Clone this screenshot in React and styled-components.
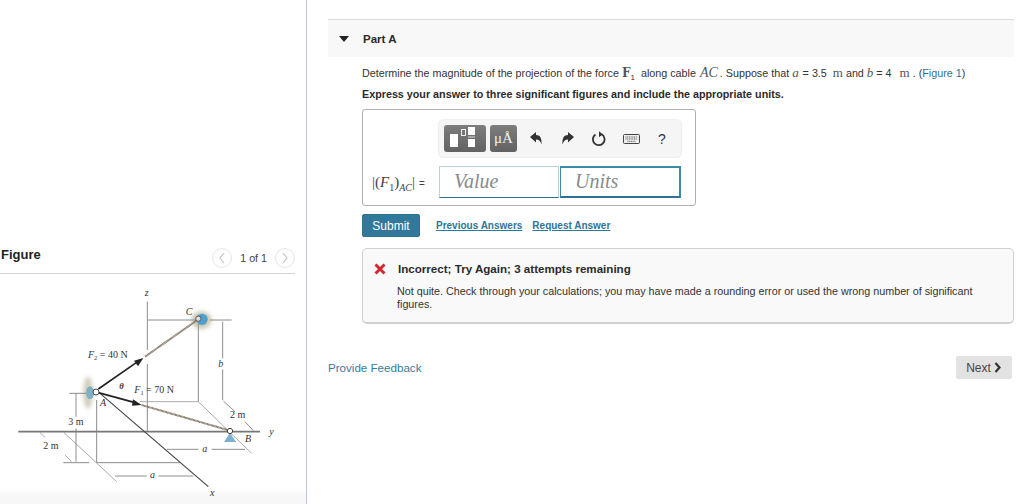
import React from 'react'
import styled, { createGlobalStyle } from 'styled-components'

const GlobalStyle = createGlobalStyle`
  html, body {
    margin: 0;
    padding: 0;
    background: #fff;
  }
  body {
    font-family: "Liberation Sans", Arial, sans-serif;
    color: #222;
  }
`

const Page = styled.div`
  width: 1024px;
  height: 504px;
  display: flex;
  overflow: hidden;
`
const FigurePane = styled.aside`
  width: 306px;
  flex: none;
  box-sizing: content-box;
  border-right: 1px solid #b9c9d9;
  padding-top: 245px;
  display: flex;
  flex-direction: column;
  background: linear-gradient(to bottom, #fff 486px, #f7f7f7 496px);
`
const FigureHeader = styled.div`
  width: 295px;
  height: 29px;
  box-sizing: border-box;
  border-bottom: 1px solid #d4d4d4;
  display: flex;
  align-items: flex-start;
  justify-content: space-between;
  padding: 2px 0 0 1px;
`
const FigureTitle = styled.h2`
  margin: 0;
  font-size: 13px;
  line-height: 15px;
  font-weight: 700;
  color: #222;
`
const Pager = styled.div`
  display: flex;
  align-items: center;
  font-size: 10.7px;
  color: #444;
  gap: 8px;
  margin-top: 1px;
`
const PagerButton = styled.span`
  width: 20px;
  height: 20px;
  box-sizing: border-box;
  border: 1px solid #e6e6e6;
  border-radius: 50%;
  display: flex;
  align-items: center;
  justify-content: center;
`
const Diagram = styled.svg`
  display: block;
  width: 306px;
  height: 229px;
  margin-top: 1px;
  font-family: "Liberation Serif", serif;
`
const Content = styled.main`
  width: 686px;
  margin-left: 21px;
  padding-top: 19px;
`
const PartHeader = styled.div`
  height: 38px;
  box-sizing: border-box;
  background: #f8f8f8;
  border-top: 1px solid #dcdcdc;
  display: flex;
  align-items: center;
  padding-left: 11px;
  gap: 14px;
`
const Caret = styled.span`
  width: 0;
  height: 0;
  border-left: 5px solid transparent;
  border-right: 5px solid transparent;
  border-top: 6px solid #222;
`
const PartTitle = styled.h3`
  margin: 0;
  font-size: 11.5px;
  font-weight: 700;
  color: #2b2b2b;
`
const Body = styled.div`
  padding: 8px 0 0 34px;
`
const Prompt = styled.p`
  margin: 0;
  font-size: 10.75px;
  line-height: 16px;
  color: #333;
  white-space: nowrap;
`
const Instruction = styled.p`
  margin: 6px 0 0;
  font-size: 10.75px;
  line-height: 15px;
  font-weight: 700;
  color: #2b2b2b;
  white-space: nowrap;
`
const MathVar = styled.span`
  font-family: ${props => (props.$bold ? '"DejaVu Serif"' : '"Liberation Serif"')}, serif;
  font-style: ${props => (props.$upright ? 'normal' : 'italic')};
  font-weight: ${props => (props.$bold ? 700 : 400)};
  font-size: ${props => props.$size || 13}px;
  line-height: 0;
  margin: 0 ${props => props.$right || 0}px 0 ${props => props.$left || 0}px;
  color: #555;
`
const Sub = styled.sub`
  font-size: ${props => props.$size || 8}px;
  line-height: 0;
  margin-right: ${props => props.$right || 0}px;
`
const InlineLink = styled.a`
  color: #2f7596;
`
const AnswerBox = styled.div`
  width: 334px;
  height: 97px;
  box-sizing: border-box;
  margin-top: 7px;
  border: 1px solid #b0b0b0;
  border-radius: 3px;
  padding: 9px 13px 0 75px;
`
const Toolbar = styled.div`
  height: 39px;
  box-sizing: border-box;
  background: #f5f5f5;
  border: 1px solid #eee;
  border-radius: 5px;
  display: flex;
  align-items: center;
  padding-left: 5px;
`
const TemplateButton = styled.span`
  width: ${props => props.$width}px;
  height: 27px;
  margin-right: 4px;
  border-radius: 3px;
  background: linear-gradient(#7d7d7d, #626262);
  display: flex;
  align-items: center;
  justify-content: center;
  color: #f2f2f2;
  font-family: "Liberation Serif", serif;
  font-size: 15px;
`
const ToolIcon = styled.span`
  width: ${props => props.$width}px;
  flex: none;
  display: flex;
  justify-content: center;
  color: #333;
  font-size: 14px;
`
const AnswerRow = styled.div`
  display: flex;
  align-items: center;
  margin: 8px 0 0 -66px;
`
const AnswerLabel = styled.div`
  width: 67px;
  height: 32px;
  flex: none;
  line-height: 32px;
  color: #444;
  font-family: "Liberation Serif", serif;
  font-size: 15px;
  white-space: nowrap;
`
const Equals = styled.span`
  font-family: "Liberation Sans", sans-serif;
  font-size: 10px;
  margin-left: 4px;
`
const FieldBox = styled.div`
  width: ${props => props.$width}px;
  height: 32px;
  box-sizing: border-box;
  margin-right: ${props => props.$gap || 0}px;
  border: 1px solid ${props => (props.$active ? '#3d8aa8' : '#b9d2dd')};
  border-bottom: ${props => (props.$active ? 2 : 1)}px solid #2a7596;
  border-right-width: ${props => (props.$active ? 2 : 1)}px;
  border-top-width: ${props => (props.$active ? 2 : 1)}px;
  padding-left: 14px;
  font-family: "Liberation Serif", serif;
  font-style: italic;
  font-size: 20px;
  line-height: ${props => (props.$active ? 27 : 29)}px;
  color: #8a8a8a;
`
const ActionRow = styled.div`
  display: flex;
  align-items: flex-start;
  margin-top: 8px;
`
const SubmitButton = styled.button`
  width: 58px;
  height: 23px;
  padding: 0;
  border: 1px solid #2d7290;
  border-radius: 2px;
  background: #31789a;
  color: #fff;
  font-family: inherit;
  font-size: 12px;
`
const ActionLink = styled.a`
  margin: 5px 0 0 ${props => props.$gap}px;
  color: #2f7596;
  font-size: 10px;
  line-height: 13px;
  font-weight: 700;
  text-decoration: underline;
`
const Feedback = styled.section`
  width: 652px;
  height: 76px;
  box-sizing: border-box;
  margin-top: 11px;
  background: #f9f9f9;
  border: 1px solid #d0d0d0;
  border-bottom-width: 2px;
  border-radius: 5px;
  padding: 12px 20px 0 11px;
`
const FeedbackTitle = styled.div`
  display: flex;
  align-items: center;
  gap: 12px;
  font-size: 11.6px;
  line-height: 16px;
  font-weight: 700;
  color: #2b2b2b;
`
const FeedbackText = styled.p`
  margin: 8px 0 0 23px;
  font-size: 10.75px;
  line-height: 13px;
  color: #333;
`
const Footer = styled.div`
  display: flex;
  justify-content: space-between;
  align-items: center;
  margin-top: 32px;
  padding-right: 2px;
`
const FeedbackLink = styled.a`
  color: #3a7c9b;
  font-size: 11.6px;
`
const NextButton = styled.span`
  width: 56px;
  height: 23px;
  border-radius: 2px;
  background: #e2e2e2;
  color: #444;
  font-size: 12px;
  display: flex;
  align-items: center;
  justify-content: center;
  gap: 3px;
`

const Chevron = ({ flip }) => (
  <svg width="8" height="12" viewBox="0 0 8 12" fill="none" stroke="#c4c4c4" strokeWidth="1.2">
    <path d={flip ? 'M2 1l4 5-4 5' : 'M6 1L2 6l4 5'} />
  </svg>
)

const TemplateIcon = () => (
  <svg width="42" height="27" viewBox="0 0 42 27">
    <rect x="6" y="9" width="8" height="13" fill="#fff" />
    <rect x="17.500" y="4.500" width="4" height="6" fill="none" stroke="#eee" />
    <rect x="24" y="2" width="7" height="8" fill="#fff" />
    <rect x="24" y="11.500" width="7" height="1" fill="#ddd" />
    <rect x="24" y="14" width="7" height="8" fill="#fff" />
  </svg>
)

const Undo = ({ flip }) => (
  <svg width="12" height="13" viewBox="0 0 12 13" style={flip ? { transform: 'scaleX(-1)' } : undefined}>
    <path d="M0 5L6 0v3c4 0 6 3 5.500 9.500-1-3.500-2.500-5-5.500-5V10.500z" fill="#333" />
  </svg>
)

const Reset = () => (
  <svg width="14" height="16" viewBox="0 0 14 16" fill="none">
    <path d="M9.500 3.200A5.800 5.800 0 1 1 3.500 3.500" stroke="#333" strokeWidth="1.800" />
    <path d="M7 .2v6l3.800-3z" fill="#333" />
  </svg>
)

const Keyboard = () => (
  <svg width="17" height="10" viewBox="0 0 17 10">
    <rect x=".5" y=".5" width="16" height="9" rx="1" fill="#eee" stroke="#444" />
    <path d="M2.500 3h12M2.500 5h12M4.500 7.300h8" stroke="#555" strokeDasharray="1 .7" />
  </svg>
)

const Cross = () => (
  <svg width="12" height="12" viewBox="0 0 12 12">
    <path d="M1.500 1.500l9 9M10.500 1.500l-9 9" stroke="#cf2a33" strokeWidth="3" />
  </svg>
)

const Arrow = ({ d, head }) => (
  <g>
    <path d={d} stroke="#222" strokeWidth="5" fill="none" />
    <polygon points={head} fill="#222" />
  </g>
)

const FigureDrawing = () => (
  <Diagram viewBox="0 105 918 687">
    <defs>
      <filter id="soft" x="-5%" y="-5%" width="110%" height="110%">
        <feGaussianBlur stdDeviation="1.200" />
      </filter>
      <filter id="halo" x="-50%" y="-50%" width="200%" height="200%">
        <feGaussianBlur stdDeviation="7" />
      </filter>
    </defs>
    <ellipse cx="264" cy="458" rx="14" ry="48" fill="#cfccba" filter="url(#halo)" />
    <ellipse cx="604" cy="240" rx="30" ry="26" fill="#c9c6b2" filter="url(#halo)" />
    <g filter="url(#soft)">
      <path d="M442 185V330M442 372V575M442 240H590M595 250V485M290 480V668H540M190 668H268M630 240h65" stroke="#8c8c8c" strokeWidth="3" fill="none" />
      <path d="M595 485H420M595 485L755 640M192 578L350 725M120 578L135 592M195 645L215 665" stroke="#999" strokeWidth="2.500" fill="none" />
      <path d="M55 575H780" stroke="#777" strokeWidth="5" />
      <path d="M300 460L625 740" stroke="#444" strokeWidth="3.500" />
      <path d="M228 460V530M228 565V665M208 460H285M668 245V355M668 388V480M345 708H440M475 708H580M500 628H595M635 628H735M670 483L705 515M735 545L760 572" stroke="#777" strokeWidth="2.500" fill="none" />
      <path d="M435 350L595 238" stroke="#7a6d5c" strokeWidth="6" strokeDasharray="3 1" />
      <path d="M425 495L690 572" stroke="#7a6d5c" strokeWidth="6" strokeDasharray="3 1" />
      <Arrow d="M295 447L410 367" head="430,354 402,362 414,379" />
      <Arrow d="M295 458L405 488" head="425,495 399,478 396,497" />
      <ellipse cx="270" cy="458" rx="12" ry="19" fill="#7fb0c4" />
      <circle cx="288" cy="456" r="9" fill="#fff" stroke="#444" strokeWidth="3" />
      <circle cx="606" cy="238" r="17" fill="#4e9fcc" />
      <circle cx="595" cy="236" r="8" fill="#ddd" stroke="#555" strokeWidth="3" />
      <polygon points="690,578 672,606 708,606" fill="#7fb0d0" />
      <circle cx="690" cy="573" r="8" fill="#fff" stroke="#444" strokeWidth="3" />
    </g>
    <g fill="#333" fontSize="30">
      <text x="434" y="168" fontStyle="italic">z</text>
      <text x="557" y="226" fontStyle="italic">C</text>
      <text x="264" y="354"><tspan fontStyle="italic">F</tspan><tspan fontSize="19" dy="5">2</tspan><tspan dy="-5"> = 40 N</tspan></text>
      <text x="655" y="380" fontStyle="italic">b</text>
      <text x="358" y="448" fontSize="26" fontWeight="700" fontStyle="italic">θ</text>
      <text x="403" y="460"><tspan fontStyle="italic">F</tspan><tspan fontSize="19" dy="5">1</tspan><tspan dy="-5"> = 70 N</tspan></text>
      <text x="300" y="498" fontStyle="italic">A</text>
      <text x="690" y="535">2 m</text>
      <text x="205" y="556">3 m</text>
      <text x="808" y="584" fontStyle="italic">y</text>
      <text x="735" y="605" fontStyle="italic">B</text>
      <text x="130" y="628">2 m</text>
      <text x="607" y="636" fontStyle="italic">a</text>
      <text x="450" y="714" fontStyle="italic">a</text>
      <text x="630" y="768" fontStyle="italic">x</text>
    </g>
  </Diagram>
)

export default function App () {
  return (
    <Page>
      <GlobalStyle />
      <FigurePane>
        <FigureHeader>
          <FigureTitle>Figure</FigureTitle>
          <Pager>
            <PagerButton><Chevron /></PagerButton>
            <span>1 of 1</span>
            <PagerButton><Chevron flip /></PagerButton>
          </Pager>
        </FigureHeader>
        <FigureDrawing />
      </FigurePane>
      <Content>
        <PartHeader>
          <Caret />
          <PartTitle>Part A</PartTitle>
        </PartHeader>
        <Body>
          <Prompt>
            Determine the magnitude of the projection of the force <MathVar $upright $bold $size={12}>F</MathVar><Sub $right={3}>1</Sub> along cable <MathVar $size={14} $left={1} $right={2}>AC</MathVar>. Suppose that <MathVar $right={1}>a</MathVar> = 3.5 &nbsp;<MathVar $upright>m</MathVar> and <MathVar>b</MathVar> = 4 &nbsp;<MathVar $upright $left={2}>m</MathVar> . (<InlineLink>Figure 1</InlineLink>)
          </Prompt>
          <Instruction>Express your answer to three significant figures and include the appropriate units.</Instruction>
          <AnswerBox>
            <Toolbar>
              <TemplateButton $width={42}><TemplateIcon /></TemplateButton>
              <TemplateButton $width={27}>μÅ</TemplateButton>
              <ToolIcon $width={30}><Undo /></ToolIcon>
              <ToolIcon $width={34}><Undo flip /></ToolIcon>
              <ToolIcon $width={28}><Reset /></ToolIcon>
              <ToolIcon $width={36}><Keyboard /></ToolIcon>
              <ToolIcon $width={26}>?</ToolIcon>
            </Toolbar>
            <AnswerRow>
              <AnswerLabel>
                |(<i>F</i><Sub $size={10}>1</Sub>)<Sub $size={10}><i>AC</i></Sub>|<Equals>=</Equals>
              </AnswerLabel>
              <FieldBox $width={120} $gap={1}>Value</FieldBox>
              <FieldBox $width={121} $active>Units</FieldBox>
            </AnswerRow>
          </AnswerBox>
          <ActionRow>
            <SubmitButton>Submit</SubmitButton>
            <ActionLink $gap={16}>Previous Answers</ActionLink>
            <ActionLink $gap={10}>Request Answer</ActionLink>
          </ActionRow>
          <Feedback>
            <FeedbackTitle><Cross />Incorrect; Try Again; 3 attempts remaining</FeedbackTitle>
            <FeedbackText>Not quite. Check through your calculations; you may have made a rounding error or used the wrong number of significant figures.</FeedbackText>
          </Feedback>
        </Body>
        <Footer>
          <FeedbackLink>Provide Feedback</FeedbackLink>
          <NextButton>Next
            <svg width="8" height="11" viewBox="0 0 8 11" fill="none" stroke="#333" strokeWidth="2.200"><path d="M1.500 1l4 4.500-4 4.500" /></svg>
          </NextButton>
        </Footer>
      </Content>
    </Page>
  )
}
